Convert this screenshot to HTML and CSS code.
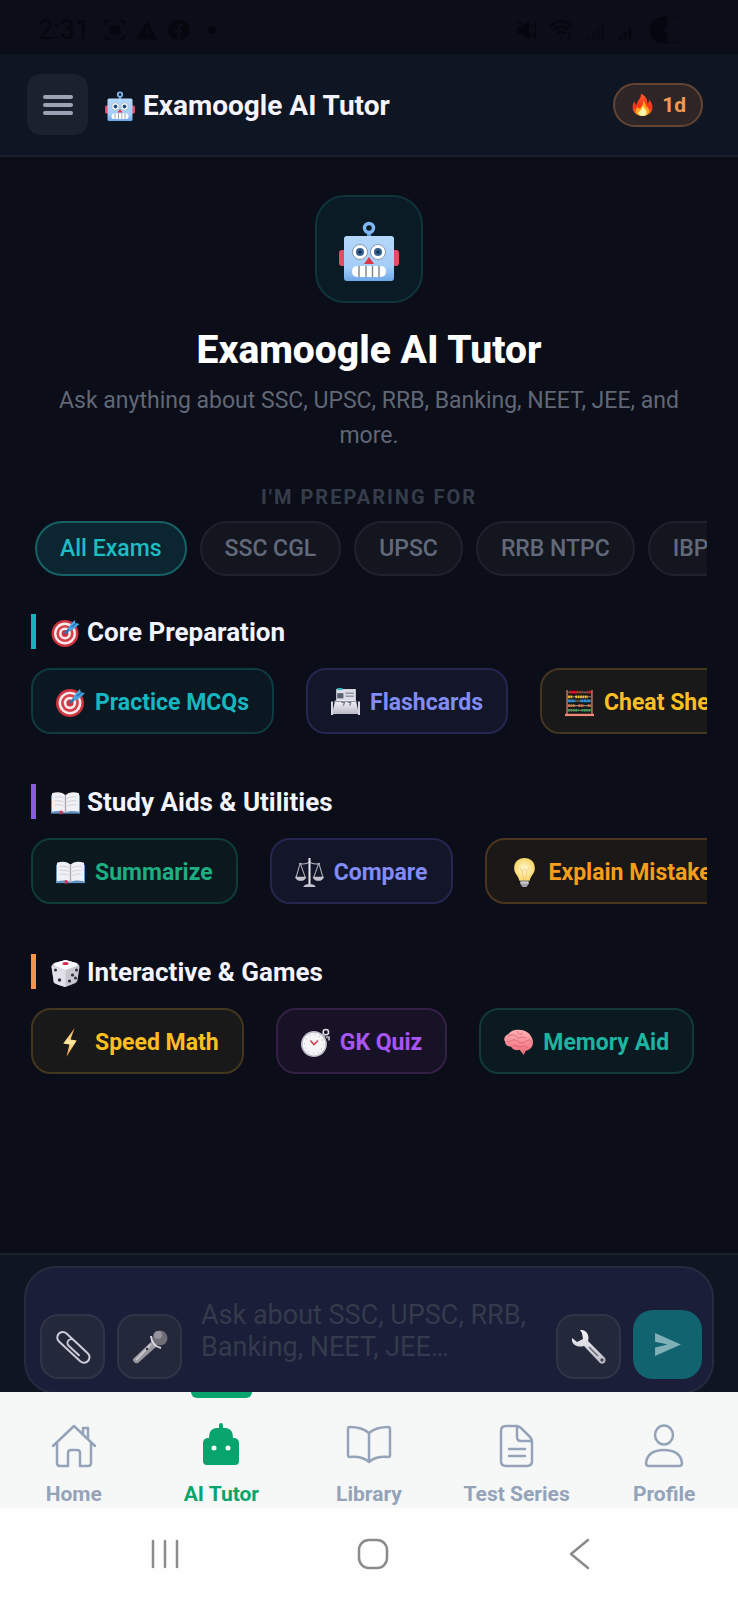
FILE: index.html
```html
<!DOCTYPE html>
<html lang="en">
<head>
<meta charset="utf-8">
<meta name="viewport" content="width=device-width, initial-scale=1">
<title>Examoogle AI Tutor</title>
<link rel="stylesheet" href="styles.css">
</head>
<body>
<svg class="sprite" aria-hidden="true">
  <defs>
    <linearGradient id="face" x1="0" y1="0" x2="0" y2="1"><stop offset="0" stop-color="#b5d8fb"/><stop offset=".7" stop-color="#a3ccf8"/><stop offset="1" stop-color="#6fa8e8"/></linearGradient>
    <linearGradient id="flame" x1="0" y1="0" x2="0" y2="1"><stop offset="0" stop-color="#ff5a2a"/><stop offset=".6" stop-color="#f5331a"/><stop offset="1" stop-color="#ff8a1c"/></linearGradient>
    <linearGradient id="silver" x1="0" y1="0" x2="0" y2="1"><stop offset="0" stop-color="#f7f6fa"/><stop offset="1" stop-color="#bcbac6"/></linearGradient>
    <radialGradient id="glow"><stop offset="0" stop-color="#fffbe0"/><stop offset="1" stop-color="#f8d565"/></radialGradient>
    <linearGradient id="bolt" x1="0" y1="0" x2="0" y2="1"><stop offset="0" stop-color="#f0a030"/><stop offset=".5" stop-color="#ffe9a0"/><stop offset="1" stop-color="#e88a20"/></linearGradient>
    <linearGradient id="pink" x1="0" y1="0" x2="0" y2="1"><stop offset="0" stop-color="#ffb3b6"/><stop offset="1" stop-color="#ee6877"/></linearGradient>
  </defs>
  <symbol id="robot" viewBox="0 0 60 60">
    <rect x="0" y="29" width="8" height="16" rx="3" fill="#e34c62"/><rect x="52" y="29" width="8" height="16" rx="3" fill="#e34c62"/>
    <path d="M30 11v7" stroke="#5b9fe0" stroke-width="4"/><circle cx="30" cy="7" r="4.500" fill="none" stroke="#7fb8f2" stroke-width="3.500"/>
    <rect x="5" y="15" width="50" height="45" rx="3" fill="url(#face)"/>
    <circle cx="21" cy="31" r="7.500" fill="#fff" stroke="#8a98aa"/><circle cx="39" cy="31" r="7.500" fill="#fff" stroke="#8a98aa"/>
    <circle cx="21" cy="31" r="4" fill="#315f92"/><circle cx="39" cy="31" r="4" fill="#315f92"/><circle cx="21" cy="31" r="1.600" fill="#122b4d"/><circle cx="39" cy="31" r="1.600" fill="#122b4d"/>
    <path d="M30 36l5 7H25z" fill="#dc3546"/>
    <rect x="13" y="45" width="34" height="11" rx="5" fill="#fff"/><path d="M20 45v11M27 45v11M33.500 45v11M40 45v11" stroke="#77838f" stroke-width="1.400"/>
  </symbol>
  <symbol id="fire" viewBox="0 0 28 28">
    <path d="M12 1c7 3 8 8 8 12 2-1 2-3 2-5 3 4 5 7 4 11-1 6-6 9-12 9S2 24 2 18c0-4 1-6 2-8 1 2 1 4 3 5C7 9 13 7 12 1z" fill="url(#flame)"/>
    <path d="M15 9c3 4 3 7 5 8 1 2 2 3 2 5 0 4-4 6-8 6s-8-2-8-6c0-3 1-4 2-5 1 1 2 2 3 2 2-3 4-5 4-10z" fill="#ffa820"/><path d="M14 16c3 3 5 5 5 8s-2 4-5 4-5-2-5-5c2 0 4-3 5-7z" fill="#fff5a8"/>
  </symbol>
  <symbol id="target" viewBox="0 0 28 28">
    <circle cx="13.500" cy="14.500" r="13.500" fill="#cf3340"/><circle cx="13.500" cy="14.500" r="11" fill="#f6e9ea"/><circle cx="13.500" cy="14.500" r="8.600" fill="#d5404b"/><circle cx="13.500" cy="14.500" r="6" fill="#f6e9ea"/><circle cx="13.500" cy="14.500" r="3.400" fill="#cf3340"/>
    <path d="M13.500 14.500L22 6" stroke="#2474b0" stroke-width="2.500"/><path d="M17 8l6-7 1 3 4 1-7 6-4 1z" fill="#48a5e4"/><path d="M20 8l5-4" stroke="#1c6daa" stroke-width="1.200"/>
  </symbol>
  <symbol id="cards" viewBox="0 0 28 28">
    <path d="M5 1h19v14H5z" fill="#dcdde6"/><path d="M6 1h5" stroke="#30b3bd" stroke-width="2"/><path d="M6 5h6v5H6z" fill="#596270"/><path d="M14 5h8M14 8h8" stroke="#9498a4" stroke-width="1.500"/>
    <path d="M4 12h20l3 13H1z" fill="url(#silver)"/><path d="M1 13v13M27 13v13" stroke="#d5d4df" stroke-width="2"/><path d="M3 13h22" stroke="#9795a5"/><path d="M10 14h3l-1 3M16 14h3l-1 3" fill="none" stroke="#777685" stroke-width="1.200"/>
  </symbol>
  <symbol id="abacus" viewBox="0 0 28 28">
    <path d="M2 2v24M26 2v24" stroke="#b9665a" stroke-width="1.600"/><path d="M0 26h28" stroke="#f0887a" stroke-width="2.200"/>
    <path d="M3 4h22M3 8.500h22M3 12.500h22M3 17h22M3 21.500h22" stroke="#888"/>
    <g fill="none" stroke-width="2.600"><path d="M4 4h13M21 4h4" stroke="#c81e1e" stroke-dasharray="1.700 .6"/><path d="M3 8.500h4M10 8.500h12" stroke="#f4bd2a" stroke-dasharray="1.700 .6"/><path d="M3 12.500h7M15 12.500h10" stroke="#2795dd" stroke-dasharray="2.600 .6"/><path d="M3 17h7M13 17h5M22 17h3" stroke="#e37649" stroke-dasharray="1.700 .6"/><path d="M3 21.500h10M16 21.500h9" stroke="#3fa75a" stroke-dasharray="1.700 .6"/></g>
  </symbol>
  <symbol id="book" viewBox="0 0 30 28">
    <path d="M0 6h30v19H0z" fill="#5f96c4"/><path d="M1 4c6-2 11-1 14 2 3-3 8-4 14-2v19c-6-1-11-1-14 1-3-2-8-2-14-1z" fill="#f1f0f4"/><path d="M15 6v18" stroke="#a9a8b2" stroke-width="1.400"/><path d="M4 8c4-1 7 0 9 1M4 12c4-1 7 0 9 1M4 16c4-1 7 0 9 1M17 9c3-1 5-2 9-1M17 13c3-1 5-2 9-1M17 17c3-1 5-2 9-1" fill="none" stroke="#cfced6"/><path d="M9 22h3v4l-1.500-1L9 26z" fill="#d92e57"/>
  </symbol>
  <symbol id="scales" viewBox="0 0 28 28">
    <g fill="none" stroke="#b6b5be" stroke-width="1"><path d="M4 5q5 2 10-1 5 3 10 1M5 5L1 19M5 5l5 14M23 5l-5 14M23 5l4 14"/></g><path d="M14 0v27" stroke="#e4e3ea" stroke-width="2"/><path d="M0 18h11q-1 4-5.500 4T0 18zM17 18h11q-1 4-5.500 4T17 18zM8 28q1-3 6-3t6 3z" fill="#c4c3cd"/>
  </symbol>
  <symbol id="bulb" viewBox="0 0 28 28">
    <path d="M14 0c6 0 10 4 10 10 0 5-4 7-5 12H9C8 17 4 15 4 10 4 4 8 0 14 0z" fill="url(#glow)"/><path d="M10 10l2 3 2-3 2 3 2-3M12 13l1 8M16 13l-1 8" fill="none" stroke="#eec46c" stroke-width=".8"/><path d="M10 22h8v3l-2 3h-4l-2-3z" fill="#9da0aa"/><path d="M10 24h8" stroke="#e5e5ea"/>
  </symbol>
  <symbol id="die" viewBox="0 0 28 28">
    <path d="M14 1l11 3c2 1 3 2 3 4l-2 13c0 1-1 2-2 3l-10 4c-5-1-9-3-11-4-1-1-1-2-1-3L0 8c0-2 1-3 3-4z" fill="#c8c7d0"/><path d="M3 4l11-3 11 3c1 1 1 2 0 3l-11 4L3 7C2 6 2 5 3 4z" fill="#fbfafd"/><path d="M0 7l14 4v17c-5-1-9-3-11-4-1-1-1-2-1-3z" fill="#e2e1e9"/><ellipse cx="14" cy="4.500" rx="3" ry="1.500" fill="#d3244f"/><g fill="#30303a"><circle cx="4" cy="11" r="1.500"/><circle cx="8" cy="21" r="1.700"/><circle cx="25" cy="11" r="1.500"/><circle cx="21" cy="16" r="1.600"/><circle cx="24" cy="19" r="1.500"/><circle cx="18" cy="22" r="1.600"/></g>
  </symbol>
  <symbol id="zap" viewBox="0 0 28 28"><path d="M18 0L7 15l6 1-3 12 10-16-6-1z" fill="url(#bolt)"/></symbol>
  <symbol id="watch" viewBox="0 0 28 28">
    <circle cx="24" cy="4" r="2.600" fill="none" stroke="#dedde4" stroke-width="1.500"/><path d="M20 6l3 3M24 9h3v3" stroke="#aaa9b4" stroke-width="2" fill="none"/><circle cx="12.500" cy="15.500" r="12.500" fill="#bdbcc6"/><circle cx="12.500" cy="15.500" r="11" fill="#f5f4f7"/><circle cx="12.500" cy="15.500" r="9" fill="none" stroke="#bbb" stroke-dasharray="1 3.700"/><path d="M9 12l3.500 4 4-4" fill="none" stroke="#d54252" stroke-width="1.500"/>
  </symbol>
  <symbol id="brain" viewBox="0 0 28 28">
    <path d="M4 6c3-4 8-5 12-4 6 0 11 5 12 11 0 6-3 8-7 9l-2 4-4-5c-3 1-7 0-8-3-4 0-6-2-6-5-2-2 0-6 3-7z" fill="url(#pink)"/><path d="M4 8c4-3 7-1 9 1s5-2 8 1M3 13c4 1 5-3 9-1s5 4 9 1 5 0 6 1M8 18c3-3 6 1 9 0s4-1 6 1M13 3c0 3 3 4 5 2" fill="none" stroke="#d9606f" stroke-width=".8"/>
  </symbol>
  <symbol id="clip" viewBox="0 0 36 36"><path d="M6 -5H-14a5.500 5.500 0 0 0 0 11H15a5 5 0 0 0 0-11H-4a3 3 0 0 0 0 7.500H10" transform="translate(18 18) rotate(43) translate(0 -.5)" fill="none" stroke="#cbcad6" stroke-width="2" stroke-linecap="round" stroke-linejoin="round"/></symbol>
  <symbol id="mic" viewBox="0 0 36 36"><path d="M20 12l5 5L6 34q-2 1-4-1t-1-3z" fill="#98979f"/><path d="M19 15L4 31" stroke="#c7c6cc" stroke-width="2"/><circle cx="28" cy="9" r="7.500" fill="#6f6e76"/><circle cx="26" cy="6" r="4" fill="#96959d"/><path d="M19 7q1 10 10 12" stroke="#d9d8dd" stroke-width="2" fill="none"/><circle cx="15" cy="20" r="1.200" fill="#33323b"/></symbol>
  <symbol id="wrench" viewBox="0 0 36 36"><path d="M9 1c6-1 10 5 8 11l17 17c2 4-2 7-5 5L13 17C7 19 0 16 1 9l5 4 6-3-1-6z" fill="url(#silver)"/><path d="M18 18l9 9" stroke="#686774" stroke-width="1.500"/><circle cx="31" cy="31" r="1.700" fill="#454450"/></symbol>
</svg>

<div class="app">
  <div class="status">
    <div class="status-group">
      <span class="time">2:31</span>
      <svg class="status-icon" viewBox="0 0 24 24"><path d="M2 7V2h5M17 2h5v5M22 17v5h-5M7 22H2v-5" fill="none" stroke="currentColor" stroke-width="2"/><rect x="6" y="7" width="12" height="10" rx="2" fill="currentColor"/></svg>
      <svg class="status-icon" viewBox="0 0 24 24"><path d="M12 2l11 20H1zM11 9v7h2V9zM11 18v2h2v-2z" fill="currentColor" fill-rule="evenodd"/></svg>
      <svg class="status-icon" viewBox="0 0 24 24"><path d="M12 1a11 11 0 0 0-2 22v-8H7v-3h3V9c0-3 2-4 6-4v3c-2 0-3 0-3 2v2h3l-1 3h-2v8A11 11 0 0 0 12 1z" fill="currentColor"/></svg>
      <span class="status-dot"></span>
    </div>
    <div class="status-group status-right">
      <svg class="status-icon" viewBox="0 0 24 24"><path d="M2 9h5l7-6v18l-7-6H2zM2 2l20 20M18 6v4M18 15v4M21 4v16" fill="currentColor" stroke="currentColor" stroke-width="1.500"/></svg>
      <svg class="status-icon wifi" viewBox="0 0 28 24"><path d="M1 8q12-11 24 0M5 12q8-7 16 0M9 16q4-4 8 0M13 20h1M22 15v7" fill="none" stroke="currentColor" stroke-width="2.500"/></svg>
      <svg class="status-icon faint" viewBox="0 0 24 24"><path d="M3 22v-4M8 22v-8M13 22V10M18 22V4" stroke="currentColor" stroke-width="3"/></svg>
      <svg class="status-icon" viewBox="0 0 24 24"><path d="M3 22v-4M8 22v-8M13 22V9" stroke="currentColor" stroke-width="3"/></svg>
      <svg class="battery" viewBox="0 0 44 28"><path d="M14 0a14 14 0 0 0 0 28h4V17h-5l5-8V0z" fill="currentColor"/><rect x="1" y="1" width="42" height="26" rx="13" fill="none" stroke="currentColor" stroke-width="1" opacity=".5"/></svg>
    </div>
  </div>

  <header class="header">
    <button class="menu" type="button" aria-label="Menu"><span></span><span></span><span></span></button>
    <div class="brand"><svg class="brand-icon"><use href="#robot"/></svg><span>Examoogle AI Tutor</span></div>
    <div class="streak"><svg><use href="#fire"/></svg><span>1d</span></div>
  </header>

  <main class="main">
    <section class="hero">
      <div class="hero-badge"><svg><use href="#robot"/></svg></div>
      <h1>Examoogle AI Tutor</h1>
      <p>Ask anything about SSC, UPSC, RRB, Banking, NEET, JEE, and more.</p>
    </section>

    <div class="label">I'M PREPARING FOR</div>
    <div class="chips">
      <button class="chip chip-on" type="button">All Exams</button>
      <button class="chip" type="button">SSC CGL</button>
      <button class="chip" type="button">UPSC</button>
      <button class="chip" type="button">RRB NTPC</button>
      <button class="chip" type="button">IBPS PO</button>
    </div>

    <section class="group">
      <h2 class="bar-teal"><svg><use href="#target"/></svg>Core Preparation</h2>
      <div class="tools">
        <button class="tool cyan" type="button"><svg><use href="#target"/></svg>Practice MCQs</button>
        <button class="tool indigo" type="button"><svg><use href="#cards"/></svg>Flashcards</button>
        <button class="tool yellow" type="button"><svg><use href="#abacus"/></svg>Cheat Sheet</button>
      </div>
    </section>
    <section class="group">
      <h2 class="bar-violet"><svg><use href="#book"/></svg>Study Aids &amp; Utilities</h2>
      <div class="tools">
        <button class="tool green" type="button"><svg><use href="#book"/></svg>Summarize</button>
        <button class="tool indigo" type="button"><svg><use href="#scales"/></svg>Compare</button>
        <button class="tool amber" type="button"><svg><use href="#bulb"/></svg>Explain Mistake</button>
      </div>
    </section>
    <section class="group">
      <h2 class="bar-orange"><svg><use href="#die"/></svg>Interactive &amp; Games</h2>
      <div class="tools">
        <button class="tool yellow" type="button"><svg><use href="#zap"/></svg>Speed Math</button>
        <button class="tool purple" type="button"><svg><use href="#watch"/></svg>GK Quiz</button>
        <button class="tool teal" type="button"><svg><use href="#brain"/></svg>Memory Aid</button>
      </div>
    </section>
  </main>

  <div class="composer">
    <form class="composer-box">
      <button class="square" type="button" aria-label="Attach file"><svg><use href="#clip"/></svg></button>
      <button class="square" type="button" aria-label="Voice input"><svg><use href="#mic"/></svg></button>
      <textarea aria-label="Message" rows="2" placeholder="Ask about SSC, UPSC, RRB, Banking, NEET, JEE…"></textarea>
      <button class="square" type="button" aria-label="Tools"><svg><use href="#wrench"/></svg></button>
      <button class="send" type="button" aria-label="Send"><svg viewBox="0 0 28 24"><path d="M1 0l27 12L1 24v-9l13-3L1 9z" fill="currentColor"/></svg></button>
    </form>
  </div>

  <nav class="tabs">
    <a class="tab" href="#home"><svg viewBox="0 0 44 44"><path d="M1 21L22 1l21 20M5 18v20q0 3 3 3h8V28q0-3 3-3h6q3 0 3 3v13h8q3 0 3-3V18M31 9V3h5v11"/></svg>Home</a>
    <a class="tab tab-on" href="#tutor"><svg viewBox="0 0 44 44"><path class="solid" d="M20 1q0-3 2-3t2 3v2h3q7 1 7 9v1h2q4 1 4 5v18q0 4-4 4H8q-4 0-4-4V18q0-4 4-5h2v-1q0-8 7-9h3z"/><circle class="eye" cx="15" cy="23" r="2.500"/><circle class="eye" cx="29" cy="23" r="2.500"/></svg>AI Tutor</a>
    <a class="tab" href="#library"><svg viewBox="0 0 44 44"><path d="M22 8Q15 2 3 2q-2 0-2 2v26q0 2 2 2 12-1 19 5 7-6 19-5 2 0 2-2V4q0-2-2-2Q29 2 22 8zV37"/></svg>Library</a>
    <a class="tab" href="#tests"><svg viewBox="0 0 44 44"><path d="M11 1h10q3 0 5 2l9 9q2 2 2 5v19q0 5-5 5H11q-5 0-5-5V6q0-5 5-5zM22 1v11q0 4 4 4h11M14 24h16M14 31h16"/></svg>Test Series</a>
    <a class="tab" href="#profile"><svg viewBox="0 0 44 44"><ellipse cx="22" cy="10" rx="9" ry="9.500"/><path d="M22 25c-11 0-17 5-18 13q0 3 3 3h30q3 0 3-3c-1-8-7-13-18-13z"/></svg>Profile</a>
  </nav>

  <div class="system">
    <button type="button" aria-label="Recent apps"><svg viewBox="0 0 32 32"><path d="M4 3v26M16 3v26M28 3v26"/></svg></button>
    <button type="button" aria-label="Home screen"><svg viewBox="0 0 32 32"><rect x="2" y="2" width="28" height="28" rx="10"/></svg></button>
    <button type="button" aria-label="Back"><svg viewBox="0 0 32 32"><path d="M24 2L7 16l17 14"/></svg></button>
  </div>
</div>
</body>
</html>
```
FILE: styles.css
```css
* { box-sizing: border-box; }
body {
  margin: 0;
  background: #0b0d18;
  color: #f3f4fd;
  font-family: Roboto, "Liberation Sans", sans-serif;
}
button { font: inherit; margin: 0; cursor: pointer; }
svg { display: block; flex: none; }
.sprite { position: absolute; width: 0; height: 0; }
.app { display: flex; flex-direction: column; min-height: 100vh; }

.status {
  display: flex;
  justify-content: space-between;
  align-items: center;
  height: 54px;
  padding: 6px 46px 0 38px;
  color: #06070e;
}
.status-group { display: flex; align-items: center; gap: 10px; }
.time { margin-right: 4px; font-size: 27px; }
.status-icon { width: 22px; height: 22px; }
.wifi { width: 28px; }
.status-dot { width: 8px; height: 8px; margin-left: 8px; border-radius: 50%; background: currentColor; }
.faint { opacity: 0.4; }
.battery { width: 42px; height: 28px; }

.header {
  display: flex;
  align-items: center;
  height: 103px;
  padding: 0 35px 0 27px;
  background: #0f1623;
  border-bottom: 2px solid #1b212c;
}
.menu {
  display: flex;
  flex-direction: column;
  align-items: center;
  justify-content: center;
  gap: 4px;
  width: 61px;
  height: 61px;
  padding: 0;
  border: 0;
  border-radius: 14px;
  background: #1b212d;
}
.menu span { width: 30px; height: 4px; border-radius: 2px; background: #9ca3b4; }
.brand {
  display: flex;
  align-items: center;
  gap: 8px;
  margin-left: 17px;
  padding-top: 3px;
  font-size: 28px;
  line-height: 32px;
  font-weight: 700;
}
.brand-icon { width: 30px; height: 30px; }
.streak {
  display: flex;
  align-items: center;
  gap: 8px;
  height: 44px;
  margin-left: auto;
  padding: 0 15px 0 16px;
  border: 2px solid #644534;
  border-radius: 22px;
  background: #2e2527;
  color: #f39a50;
  font-size: 21px;
  font-weight: 700;
}
.streak svg { width: 23px; height: 23px; }

.main { flex: 1; padding: 38px 31px 48px; }
.hero { display: flex; flex-direction: column; align-items: center; text-align: center; }
.hero-badge {
  display: grid;
  place-items: center;
  width: 108px;
  height: 108px;
  padding-top: 4px;
  border: 2px solid #10343b;
  border-radius: 30px;
  background: #0b1b26;
}
.hero-badge svg { width: 60px; height: 60px; }
.hero h1 { margin: 24px 0 12px; color: #fff; font-size: 39px; line-height: 46px; font-weight: 800; }
.hero p { margin: -2px 0 0; color: #606776; font-size: 23px; line-height: 35px; }
.label {
  margin: 32px 0 12px;
  color: #353d4b;
  font-size: 20px;
  line-height: 24px;
  font-weight: 700;
  letter-spacing: 2px;
  text-align: center;
}
.chips { display: flex; gap: 13px; padding-left: 4px; overflow: hidden; }
.chip {
  flex: none;
  height: 55px;
  padding: 0 23px;
  border: 2px solid #1f212c;
  border-radius: 28px;
  background: #13151f;
  color: #626979;
  font-size: 23px;
  font-weight: 500;
}
.chip-on { border-color: #176066; background: #0b2630; color: #1cbdc4; }

.group { padding-top: 38px; }
.group + .group { padding-top: 50px; }
.group h2 {
  display: flex;
  align-items: center;
  gap: 7px;
  margin: 0 0 19px;
  padding: 2px 0 0 15px;
  border-left: 5px solid;
  font-size: 26px;
  line-height: 33px;
  font-weight: 700;
  color: #f3f4fd;
}
.group h2 svg { width: 29px; height: 28px; }
.group h2.bar-teal { border-color: #13b5bb; }
.group h2.bar-violet { border-color: #8a5be4; }
.group h2.bar-orange { border-color: #f3954a; }
.tools { display: flex; gap: 32px; overflow: hidden; }
.tool {
  display: flex;
  flex: none;
  align-items: center;
  gap: 10px;
  height: 66px;
  padding: 2px 23px 0;
  border: 2px solid;
  border-radius: 20px;
  font-size: 23px;
  font-weight: 700;
  white-space: nowrap;
}
.tool svg { width: 29px; height: 29px; }
.cyan { color: #15b7c0; background: #0b1822; border-color: #0f3a40; }
.indigo { color: #818cf8; background: #131629; border-color: #252650; }
.yellow { color: #fbbf24; background: #1a1919; border-color: #43361f; }
.green { color: #1dae81; background: #0b181e; border-color: #103c36; }
.amber { color: #f59e1b; background: #1b1818; border-color: #4b351e; }
.purple { color: #a855f7; background: #171226; border-color: #332044; }
.teal { color: #1bb5a1; background: #0b1920; border-color: #12393b; }

.composer {
  padding: 11px 24px 0;
  border-top: 2px solid #1a212c;
  background: #0e1622;
  overflow: hidden;
}
.composer-box {
  display: flex;
  align-items: flex-end;
  gap: 12px;
  height: 128px;
  margin: 0 0 -2px;
  padding: 0 10px 13px 14px;
  border: 2px solid #262b40;
  border-radius: 32px;
  background: #1a1e38;
}
.square {
  display: grid;
  flex: none;
  place-items: center;
  width: 65px;
  height: 65px;
  padding: 0;
  border: 2px solid #303446;
  border-radius: 18px;
  background: #24283b;
}
.square svg { width: 36px; height: 36px; }
.composer-box textarea {
  flex: 1;
  min-width: 0;
  height: 86px;
  padding: 6px 0 0 7px;
  border: 0;
  outline: 0;
  resize: none;
  background: none;
  color: #f3f4fd;
  font-family: inherit;
  font-size: 27px;
  line-height: 32px;
  overflow: hidden;
}
.composer-box textarea::placeholder { color: #343b4c; opacity: 1; }
.send {
  display: grid;
  flex: none;
  place-items: center;
  width: 69px;
  height: 69px;
  padding: 0;
  border: 0;
  border-radius: 20px;
  background: #11636f;
  color: #7fafb7;
}
.send svg { width: 27px; height: 23px; }

.tabs {
  position: relative;
  display: grid;
  grid-template-columns: repeat(5, 1fr);
  height: 116px;
  background: #f6f8f8;
}
.tab {
  position: relative;
  display: flex;
  flex-direction: column;
  align-items: center;
  gap: 13px;
  padding-top: 33px;
  color: #94a3b8;
  font-size: 21px;
  line-height: 24px;
  font-weight: 700;
  text-decoration: none;
}
.tab svg {
  width: 44px;
  height: 44px;
  overflow: visible;
  fill: none;
  stroke: currentColor;
  stroke-width: 2.5;
  stroke-linecap: round;
  stroke-linejoin: round;
}
.tab .solid { fill: currentColor; stroke: none; }
.tab .eye { fill: #f6f8f8; stroke: none; }
.tab-on { color: #07a56b; }
.tab-on::before {
  content: "";
  position: absolute;
  top: 0;
  width: 61px;
  height: 6px;
  border-radius: 0 0 6px 6px;
  background: #07a56b;
}

.system {
  display: flex;
  align-items: center;
  justify-content: space-between;
  height: 92px;
  padding: 0 136px 0 143px;
  background: #fefefe;
}
.system button { padding: 6px; border: 0; background: none; }
.system svg { width: 32px; height: 32px; fill: none; stroke: #8b8b8b; stroke-width: 2.5; stroke-linecap: round; stroke-linejoin: round; }
```
